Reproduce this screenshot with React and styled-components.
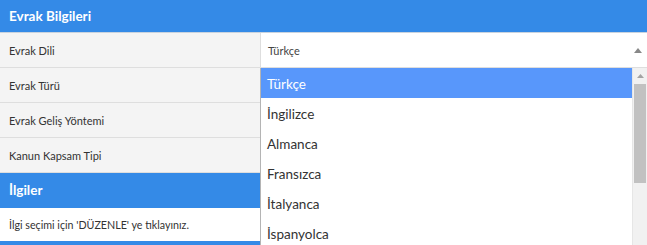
import React from "react";
import styled, { createGlobalStyle } from "styled-components";

const Global = createGlobalStyle`
  html, body { margin: 0; padding: 0; background: #ffffff; }
  body { font-family: Lato, "Open Sans", "Liberation Sans", sans-serif; overflow: hidden; }
  * { box-sizing: border-box; }
`;

const Panel = styled.div`
  width: 647px;
  display: flex;
  flex-direction: column;
`;

const SectionHeader = styled.div`
  height: ${(p) => p.$h}px;
  background: #348ae7;
  color: #ffffff;
  font-weight: 700;
  font-size: 13.5px;
  display: flex;
  align-items: center;
  padding-left: 9px;
  border-bottom: 1px solid ${(p) => (p.$line ? "#c9d3de" : "#348ae7")};
`;

const Row = styled.div`
  display: grid;
  grid-template-columns: 261px 1fr;
  height: 35px;
  border-bottom: 1px solid #dedede;
`;

const Label = styled.div`
  background: #f4f4f4;
  border-right: 1px solid #dedede;
  color: #333333;
  font-size: 11px;
  display: flex;
  align-items: center;
  padding-left: 9px;
`;

const Value = styled.div`
  position: relative;
  background: #ffffff;
  color: #444444;
  font-size: 11px;
  display: flex;
  align-items: center;
  justify-content: space-between;
  padding: 0 5px 0 7px;
`;

const Caret = styled.span`
  width: 0;
  height: 0;
  border-style: solid;
  border-width: 0 4px 5px 4px;
  border-color: transparent transparent #888888 transparent;
`;

const InfoRow = styled.div`
  height: 33px;
  background: #ffffff;
  color: #333333;
  font-size: 10.7px;
  display: flex;
  align-items: center;
  padding-left: 9px;
`;

const Dropdown = styled.div`
  position: absolute;
  top: calc(100% + 1px);
  left: -1px;
  right: 0;
  height: 200px;
  z-index: 10;
  background: #ffffff;
  border-left: 1px solid #b4b4b4;
  display: flex;
`;

const Options = styled.ul`
  list-style: none;
  margin: 0;
  padding: 0;
  flex: 1;
  overflow: hidden;
`;

const Option = styled.li`
  height: 30px;
  display: flex;
  align-items: center;
  padding: 1px 0 0 6px;
  font-size: 13.5px;
  color: ${(p) => (p.$active ? "#ffffff" : "#333333")};
  background: ${(p) => (p.$active ? "#5897fb" : "#ffffff")};
`;

const ScrollTrack = styled.div`
  width: 15px;
  background: #f1f1f1;
  border-left: 1px solid #e6e6e6;
  display: flex;
  flex-direction: column;
  align-items: center;
`;

const ScrollButton = styled.div`
  height: 15px;
  width: 100%;
  display: flex;
  align-items: center;
  justify-content: center;
`;

const ScrollThumb = styled.div`
  width: 12px;
  height: 99px;
  background: #c1c1c1;
  margin-top: 1px;
`;

const languages = [
  "Türkçe",
  "İngilizce",
  "Almanca",
  "Fransızca",
  "İtalyanca",
  "İspanyolca",
  "Rusça",
  "Arapça",
  "Farsça",
  "Japonca",
];

export default function App() {
  return (
    <>
      <Global />
      <Panel>
        <SectionHeader $h={33} $line>Evrak Bilgileri</SectionHeader>
        <Row>
          <Label>Evrak Dili</Label>
          <Value>
            <span>Türkçe</span>
            <Caret />
            <Dropdown>
              <Options>
                {languages.map((l, i) => (
                  <Option key={l} $active={i === 0}>
                    {l}
                  </Option>
                ))}
              </Options>
              <ScrollTrack>
                <ScrollButton>
                  <svg width="7" height="4" viewBox="0 0 7 4">
                    <polygon points="3.5,0 7,4 0,4" fill="#a3a3a3" />
                  </svg>
                </ScrollButton>
                <ScrollThumb />
              </ScrollTrack>
            </Dropdown>
          </Value>
        </Row>
        <Row>
          <Label>Evrak Türü</Label>
          <Value />
        </Row>
        <Row>
          <Label>Evrak Geliş Yöntemi</Label>
          <Value />
        </Row>
        <Row>
          <Label>Kanun Kapsam Tipi</Label>
          <Value />
        </Row>
        <SectionHeader $h={35}>İlgiler</SectionHeader>
        <InfoRow>İlgi seçimi için 'DÜZENLE' ye tıklayınız.</InfoRow>
        <SectionHeader $h={35} />
      </Panel>
    </>
  );
}
